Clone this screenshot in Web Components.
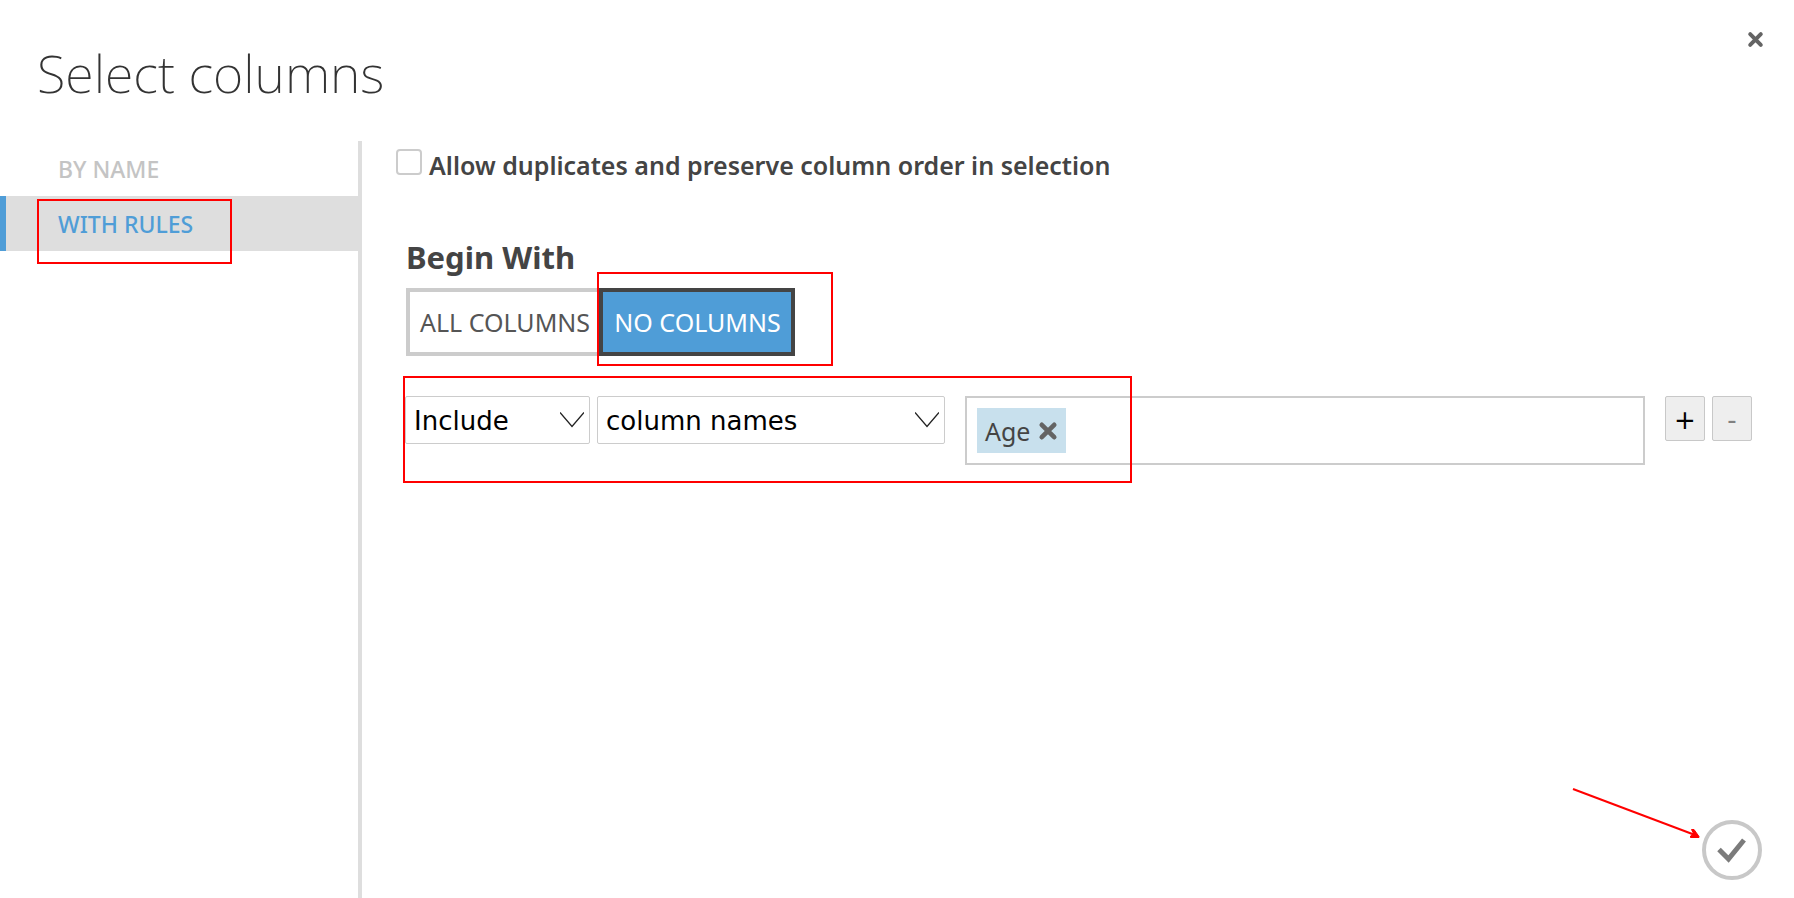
<!DOCTYPE html>
<html lang="en">
<head>
<meta charset="utf-8">
<title>Select columns</title>
<style>
  body { margin: 0; background: #fff; color: #444; font-family: "Noto Sans", "Open Sans", sans-serif; font-size: 25px; }
</style>
</head>
<body>
<column-selector>
  <span slot="title">Select columns</span>
  <side-tab slot="tabs">BY NAME</side-tab>
  <side-tab slot="tabs" active><call-out style="--inset: 3px 126px -13px 37px">WITH RULES</call-out></side-tab>
  <check-option>Allow duplicates and preserve column order in selection</check-option>
  <begin-with></begin-with>
  <rule-row></rule-row>
  <confirm-button slot="footer"></confirm-button>
</column-selector>

<script>
const define = (name, html, setup) => customElements.define(name, class extends HTMLElement {
  connectedCallback() {
    if (this.shadowRoot) return;
    const t = document.createElement('template');
    t.innerHTML = html;
    this.attachShadow({ mode: 'open' }).append(t.content.cloneNode(true));
    if (setup) setup(this, this.shadowRoot);
  }
});

const cross = '<svg viewBox="0 0 18 18" aria-hidden="true"><path d="M3.4 3.4 14.6 14.6M14.6 3.4 3.4 14.6" fill="none" stroke="#646464" stroke-width="4.2" stroke-linecap="round"/></svg>';

/* Red frame drawn over the nearest positioned ancestor. */
define('call-out', `
  <style>
    :host { display: contents; }
    i { position: absolute; inset: var(--inset); width: var(--span, auto); border: 2px solid #f00; box-sizing: border-box; pointer-events: none; z-index: 2; }
  </style>
  <slot></slot><i></i>`);

define('side-tab', `
  <style>
    :host { display: block; position: relative; }
    button { display: block; width: 100%; height: 55px; box-sizing: border-box; padding: 2px 0 0 52px; border: 0;
      border-left: 6px solid transparent; background: none; color: #c4c4c4; font: 500 23px/53px "Noto Sans", sans-serif;
      text-align: left; cursor: pointer; }
    :host([active]) button { background: #dedede; border-left-color: #4f9dd7; color: #4f9dd7; }
  </style>
  <button type="button" role="tab"><slot></slot></button>`,
  (el, root) => root.querySelector('button').setAttribute('aria-selected', el.hasAttribute('active')));

define('check-option', `
  <style>
    :host { display: block; }
    div { display: flex; align-items: flex-start; gap: 7px; }
    input { appearance: none; flex: none; width: 26px; height: 26px; margin: 1px 0 0; box-sizing: border-box;
      border: 2px solid #ccc; border-radius: 4px; background: #fff; }
    input:checked { background: #4f9dd7; }
    label { font: 630 25px/34px "Noto Sans", sans-serif; }
  </style>
  <div><input type="checkbox" id="c"><label for="c"><slot></slot></label></div>`);

define('begin-with', `
  <style>
    :host { display: block; margin: 53px 0 0 10px; }
    h2 { margin: 0 0 9px; font: 700 31px/44px "Noto Sans", sans-serif; }
    .group { display: flex; }
    button { height: 68px; box-sizing: border-box; padding: 0 9px 0 10px; background: #fff; color: #555;
      border: 4px solid #ccc; font: 400 25px/34px "Noto Sans", sans-serif; cursor: pointer; }
    .all { border-right: 0; }
    .none { width: 196px; background: #4f9dd7; border-color: #444; color: #fff; }
    .wrap { position: relative; display: flex; }
  </style>
  <h2>Begin With</h2>
  <div class="group">
    <button class="all" type="button" aria-pressed="false">ALL COLUMNS</button>
    <div class="wrap"><call-out style="--inset: -16px -38px -10px -2px"><button class="none" type="button" aria-pressed="true">NO COLUMNS</button></call-out></div>
  </div>`);

define('rule-select', `
  <style>
    :host { display: block; position: relative; flex: none; }
    select { appearance: none; display: block; width: 100%; height: 48px; box-sizing: border-box; margin: 0;
      padding: 2px 36px 0 8px; border: 1px solid #ccc; border-radius: 2px; background: #fff; color: #000;
      font: 400 26px/34px "DejaVu Sans", sans-serif; }
    svg { position: absolute; right: 6px; top: 16px; width: 24px; height: 16px; pointer-events: none; }
  </style>
  <select></select>
  <svg viewBox="0 0 24 16" aria-hidden="true"><path d="M0 .5 12 14.5 24 .5" fill="none" stroke="#222" stroke-width="1.3"/></svg>`,
  (el, root) => {
    const select = root.querySelector('select');
    select.setAttribute('aria-label', el.getAttribute('label'));
    select.add(new Option(el.getAttribute('value')));
  });

define('token-field', `
  <style>
    :host { display: flex; flex: 1; min-width: 0; box-sizing: border-box; border: 2px solid #ccc; padding: 10px; background: #fff; }
    .chip { display: flex; align-items: center; gap: 8px; height: 45px; padding: 0 8px; background: #c8e0ed; flex: none; line-height: 34px; }
    .chip button { width: 20px; height: 20px; padding: 0; border: 0; background: none; cursor: pointer; }
    svg { display: block; width: 20px; height: 20px; }
    input { flex: 1; min-width: 0; border: 0; outline: 0; padding: 0 8px; background: none; font: 400 25px/34px "Noto Sans", sans-serif; color: #444; }
  </style>
  <span class="chip"><slot></slot><button type="button" aria-label="Remove">${cross}</button></span>
  <input type="text" aria-label="Columns">`);

define('rule-row', `
  <style>
    :host { display: flex; align-items: flex-start; position: relative; margin: 40px 42px 0 9px; }
    .action { width: 185px; margin-right: 7px; }
    .kind { width: 348px; margin-right: 20px; }
    .buttons { display: flex; gap: 7px; margin-left: 20px; }
    .buttons button { width: 40px; height: 45px; box-sizing: border-box; padding: 2px 0 0; border: 1px solid #c8c8c8; border-radius: 2px;
      background: #eee; color: #000; font: 400 26px/34px "DejaVu Sans", sans-serif; cursor: pointer; }
    .buttons button:disabled { color: #808080; }
  </style>
  <call-out style="--inset: -20px auto -18px -2px; --span: 729px"></call-out>
  <rule-select class="action" label="Action" value="Include"></rule-select>
  <rule-select class="kind" label="Kind" value="column names"></rule-select>
  <token-field>Age</token-field>
  <div class="buttons"><button type="button" aria-label="Add rule">+</button><button type="button" aria-label="Remove rule" disabled>-</button></div>`);

define('confirm-button', `
  <style>
    :host { display: block; position: relative; }
    button { display: block; width: 60px; height: 60px; padding: 0; border: 0; background: none; cursor: pointer; }
    button svg { display: block; width: 60px; height: 60px; }
    .arrow { position: absolute; right: 60px; top: -34px; width: 132px; height: 54px; pointer-events: none; }
  </style>
  <button type="button" aria-label="OK">
    <svg viewBox="0 0 60 60"><circle cx="30" cy="30" r="28" fill="#fff" stroke="#c8c8c8" stroke-width="4"/>
    <path d="M17 29.5 26.5 39 42 20" fill="none" stroke="#7b7b7b" stroke-width="5"/></svg>
  </button>
  <svg class="arrow" viewBox="0 0 132 54" aria-hidden="true"><path d="M3 3 125 49" stroke="#f00" stroke-width="2"/><path d="M121.500 43.500H124L129 50.500V51.500H120.500V50L124 48.500Z" fill="#f00" stroke="#f00"/></svg>`);

define('column-selector', `
  <style>
    :host { display: flex; flex-direction: column; min-height: 100vh; position: relative; }
    header { display: flex; justify-content: space-between; align-items: flex-start; padding: 37px 30px 32px 37px; }
    h1 { margin: 0; color: #333; font: 200 52px/72px "Noto Sans", sans-serif; }
    .close { width: 17px; height: 17px; margin-top: -6px; padding: 0; border: 0; background: none; cursor: pointer; }
    .close svg { display: block; width: 17px; height: 17px; }
    .body { flex: 1; display: flex; }
    nav { width: 358px; flex: none; border-right: 4px solid #dedede; }
    main { flex: 1; min-width: 0; padding: 7px 0 0 34px; }
    footer { position: absolute; right: 32px; bottom: 18px; }
  </style>
  <header><h1><slot name="title"></slot></h1><button class="close" type="button" aria-label="Close">${cross}</button></header>
  <div class="body"><nav><slot name="tabs"></slot></nav><main><slot></slot></main></div>
  <footer><slot name="footer"></slot></footer>`);
</script>
</body>
</html>
